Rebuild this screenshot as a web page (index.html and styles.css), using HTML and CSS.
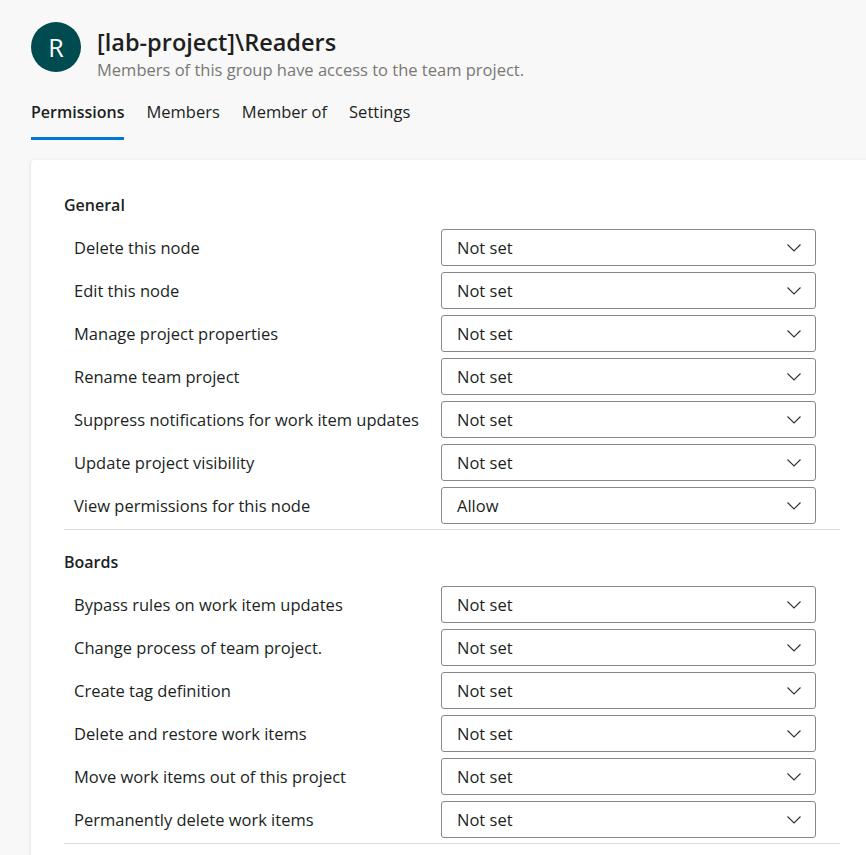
FILE: index.html
```html
<!DOCTYPE html>
<html lang="en">
<head>
<meta charset="utf-8">
<title>[lab-project]\Readers</title>
<link rel="stylesheet" href="styles.css">
</head>
<body>
<header class="header">
  <div class="avatar">R</div>
  <div class="titles">
    <h1 class="title">[lab-project]\Readers</h1>
    <div class="subtitle">Members of this group have access to the team project.</div>
  </div>
</header>
<nav class="tabs">
  <div class="tab active">Permissions</div>
  <div class="tab">Members</div>
  <div class="tab">Member of</div>
  <div class="tab">Settings</div>
</nav>
<main class="card">
  <section class="section">
    <h2 class="section-title">General</h2>
    <div class="rows">
      <div class="label">Delete this node</div>
      <div class="select"><span>Not set</span><svg class="chev" viewBox="0 0 14 8"><path d="M0.5 0.5 L7 7 L13.5 0.5"/></svg></div>
      <div class="label">Edit this node</div>
      <div class="select"><span>Not set</span><svg class="chev" viewBox="0 0 14 8"><path d="M0.5 0.5 L7 7 L13.5 0.5"/></svg></div>
      <div class="label">Manage project properties</div>
      <div class="select"><span>Not set</span><svg class="chev" viewBox="0 0 14 8"><path d="M0.5 0.5 L7 7 L13.5 0.5"/></svg></div>
      <div class="label">Rename team project</div>
      <div class="select"><span>Not set</span><svg class="chev" viewBox="0 0 14 8"><path d="M0.5 0.5 L7 7 L13.5 0.5"/></svg></div>
      <div class="label">Suppress notifications for work item updates</div>
      <div class="select"><span>Not set</span><svg class="chev" viewBox="0 0 14 8"><path d="M0.5 0.5 L7 7 L13.5 0.5"/></svg></div>
      <div class="label">Update project visibility</div>
      <div class="select"><span>Not set</span><svg class="chev" viewBox="0 0 14 8"><path d="M0.5 0.5 L7 7 L13.5 0.5"/></svg></div>
      <div class="label">View permissions for this node</div>
      <div class="select"><span>Allow</span><svg class="chev" viewBox="0 0 14 8"><path d="M0.5 0.5 L7 7 L13.5 0.5"/></svg></div>
    </div>
  </section>
  <section class="section">
    <h2 class="section-title">Boards</h2>
    <div class="rows">
      <div class="label">Bypass rules on work item updates</div>
      <div class="select"><span>Not set</span><svg class="chev" viewBox="0 0 14 8"><path d="M0.5 0.5 L7 7 L13.5 0.5"/></svg></div>
      <div class="label">Change process of team project.</div>
      <div class="select"><span>Not set</span><svg class="chev" viewBox="0 0 14 8"><path d="M0.5 0.5 L7 7 L13.5 0.5"/></svg></div>
      <div class="label">Create tag definition</div>
      <div class="select"><span>Not set</span><svg class="chev" viewBox="0 0 14 8"><path d="M0.5 0.5 L7 7 L13.5 0.5"/></svg></div>
      <div class="label">Delete and restore work items</div>
      <div class="select"><span>Not set</span><svg class="chev" viewBox="0 0 14 8"><path d="M0.5 0.5 L7 7 L13.5 0.5"/></svg></div>
      <div class="label">Move work items out of this project</div>
      <div class="select"><span>Not set</span><svg class="chev" viewBox="0 0 14 8"><path d="M0.5 0.5 L7 7 L13.5 0.5"/></svg></div>
      <div class="label">Permanently delete work items</div>
      <div class="select"><span>Not set</span><svg class="chev" viewBox="0 0 14 8"><path d="M0.5 0.5 L7 7 L13.5 0.5"/></svg></div>
    </div>
  </section>
</main>
</body>
</html>
```

FILE: styles.css
```css
html, body {
  margin: 0;
  padding: 0;
  background: #f8f8f8;
  overflow: hidden;
}
body {
  font-family: "Open Sans", "Noto Sans", sans-serif;
  color: #201f1e;
  width: 866px;
  height: 855px;
}
.header {
  display: flex;
  align-items: flex-start;
  padding: 22px 0 0 31px;
}
.avatar {
  width: 50px;
  height: 50px;
  border-radius: 50%;
  background: #004b50;
  color: #ffffff;
  font-size: 25px;
  line-height: 50px;
  text-align: center;
  flex: none;
}
.titles {
  margin-left: 16px;
  padding-top: 5px;
}
.title {
  margin: 0;
  font-size: 23.5px;
  font-weight: 600;
  line-height: 30px;
  color: #201f1e;
}
.subtitle {
  margin-top: 2px;
  font-size: 16.5px;
  line-height: 22px;
  color: #797775;
}
.tabs {
  display: flex;
  gap: 22px;
  padding: 16px 0 0 31px;
}
.tab {
  font-size: 16.5px;
  line-height: 22px;
  padding: 4px 0 14px;
  border-bottom: 3px solid transparent;
  color: #201f1e;
}
.tab.active {
  font-size: 16px;
  font-weight: 600;
  border-bottom-color: #0078d4;
}
.card {
  display: block;
  margin: 20px 0 0 31px;
  width: 842px;
  padding: 13px 0 0 33px;
  box-sizing: border-box;
  background: #ffffff;
  border-radius: 4px 0 0 0;
  box-shadow: 0 1px 4px rgba(0, 0, 0, 0.12);
  height: 720px;
}
.section {
  width: 776px;
  padding: 21px 0 5px;
  border-bottom: 1px solid #dcdcdc;
}
.section-title {
  margin: 0 0 13px;
  font-size: 16px;
  font-weight: 600;
  line-height: 22px;
}
.rows {
  display: grid;
  grid-template-columns: 377px 375px;
  row-gap: 6px;
}
.label {
  padding-left: 10px;
  font-size: 16.5px;
  line-height: 37px;
  white-space: nowrap;
}
.select {
  height: 37px;
  box-sizing: border-box;
  border: 1px solid #8a8886;
  border-radius: 3px;
  display: flex;
  align-items: center;
  justify-content: space-between;
  padding: 0 14px 0 15px;
  font-size: 16.5px;
}
.chev {
  width: 14px;
  height: 8px;
  fill: none;
  stroke: #323130;
  stroke-width: 1.1;
}
```
